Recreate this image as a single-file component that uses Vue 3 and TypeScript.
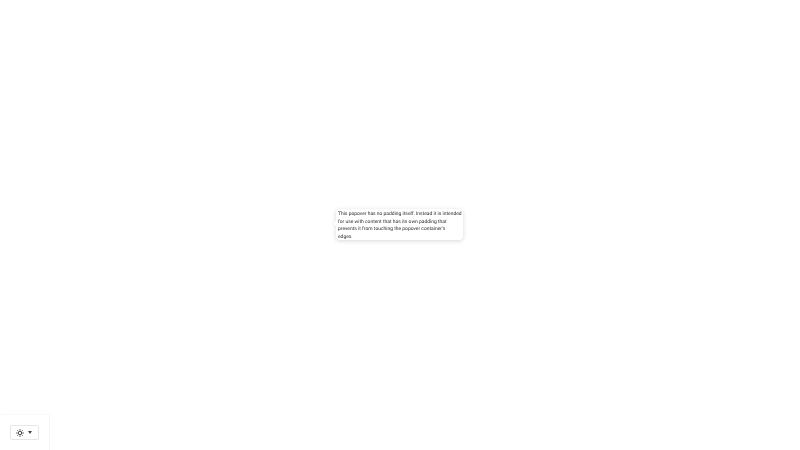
<script setup lang="ts">
const textMain =
  "This popover has no padding itself. Instead it is intended for use with content that has its own padding that prevents it from touching the popover container's";
const textEnd = "edges.";
</script>

<template>
  <div class="page">
    <div class="popover">
      <span class="arrow"></span>
      <p class="content">{{ textMain }}<br />{{ textEnd }}</p>
    </div>
    <div class="corner">
      <button class="theme" type="button" aria-label="Theme">
        <svg class="sun" viewBox="0 0 16 16" width="8" height="8" fill="none" stroke="#444" stroke-width="1.8" stroke-linecap="round">
          <circle cx="8" cy="8" r="3.4" />
          <path d="M8 1v1.5M8 13.5V15M1 8h1.5M13.5 8H15M3 3l1.1 1.1M11.9 11.9L13 13M3 13l1.1-1.1M11.9 4.1L13 3" />
        </svg>
        <span class="caret"></span>
      </button>
    </div>
  </div>
</template>

<style scoped>
.page {
  width: 800px;
  height: 450px;
  display: flex;
  align-items: center;
  justify-content: center;
  background: #fff;
  font-family: Roboto, "Noto Sans", sans-serif;
  position: relative;
  overflow: hidden;
}
.popover {
  position: relative;
  width: 127px;
  height: 31px;
  background: #fff;
  border-radius: 4px;
  box-shadow: 0 1px 4px rgba(0, 0, 0, 0.16);
  margin: -1px 1px 0 0;
}
.arrow {
  position: absolute;
  left: -2px;
  top: 12px;
  width: 5px;
  height: 5px;
  background: #fff;
  transform: rotate(45deg);
  box-shadow: -1px 1px 2px rgba(0, 0, 0, 0.04);
}
.content {
  position: relative;
  margin: 0 -2px 0 0;
  padding: 2px 0 0 2px;
  font-size: 4.95px;
  line-height: 7.5px;
  color: #2a2a2a;
  text-rendering: geometricPrecision;
  filter: blur(0.2px);
}
.corner {
  position: absolute;
  left: 0;
  bottom: 0;
  width: 50px;
  height: 36px;
  border-top: 1px dotted #f5f5f5;
  border-right: 1px solid #f5f5f5;
  display: flex;
  align-items: flex-start;
  padding: 10px 0 0 10px;
  box-sizing: border-box;
}
.theme {
  width: 29px;
  height: 15px;
  padding: 0 0 0 5px;
  display: flex;
  align-items: center;
  gap: 3.5px;
  background: #fff;
  border: 1px solid #e6e6e6;
  border-radius: 2px;
  box-sizing: border-box;
}
.sun { display: block; filter: blur(0.25px); }
.caret {
  width: 0;
  height: 0;
  border-left: 2.5px solid transparent;
  border-right: 2.5px solid transparent;
  border-top: 3px solid #444;
}
</style>
